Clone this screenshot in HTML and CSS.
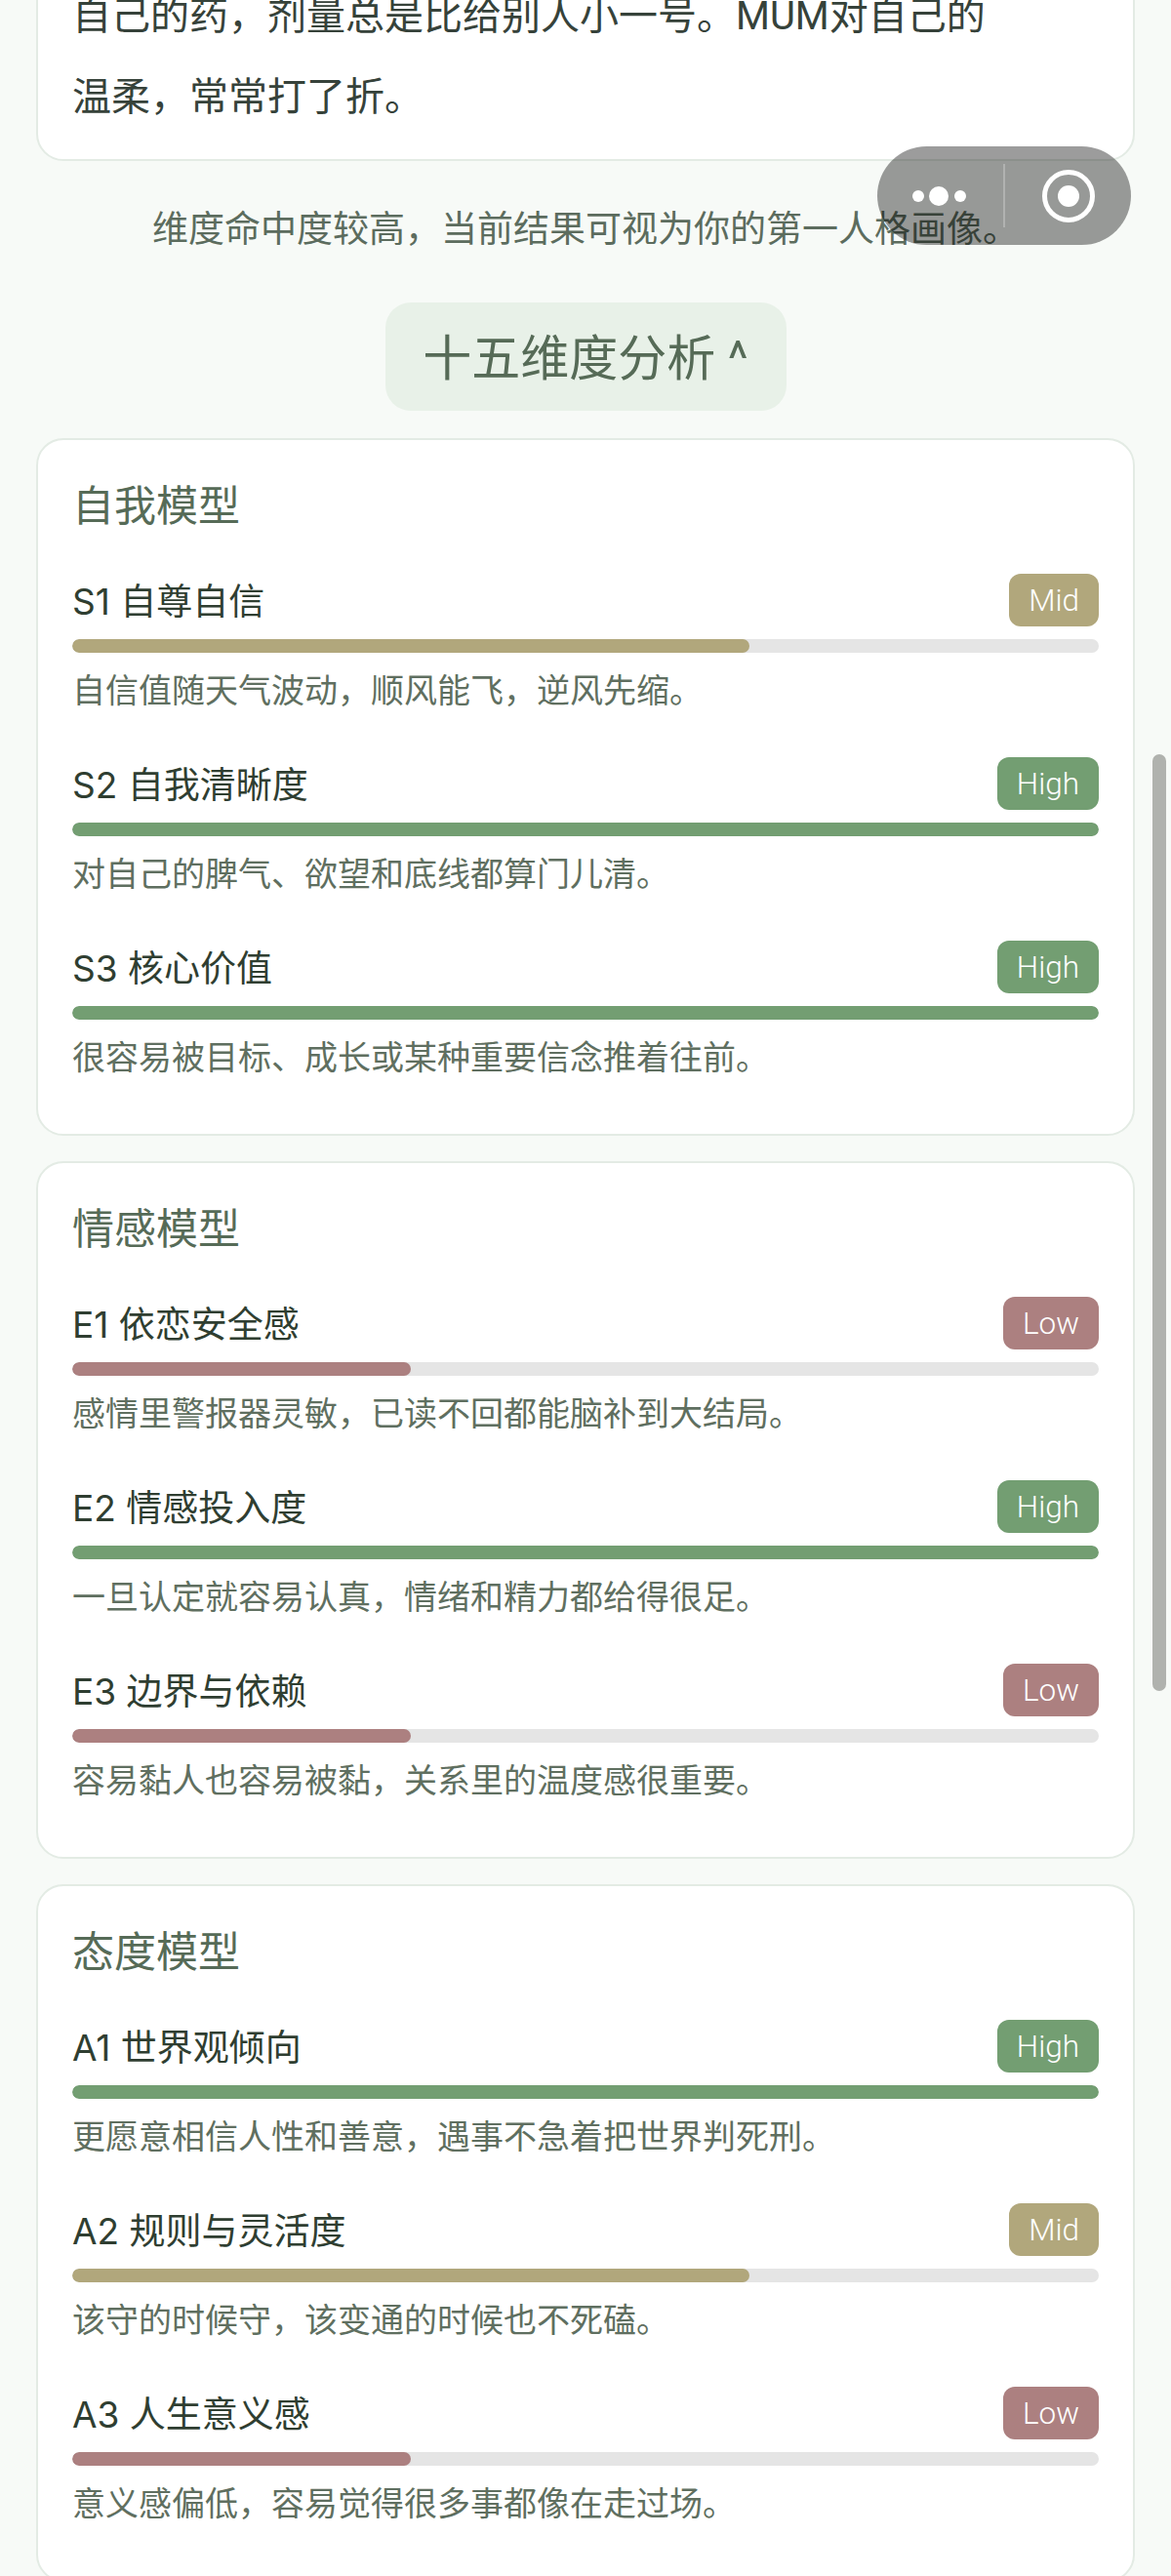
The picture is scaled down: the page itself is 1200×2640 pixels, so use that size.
FILE: index.html
```html
<!DOCTYPE html>
<html lang="zh-CN">
<head>
<meta charset="UTF-8" />
<meta name="viewport" content="width=device-width, initial-scale=1" />
<title>人格测试结果</title>
<link rel="stylesheet" href="styles.css">
</head>
<body>

<div class="page">
  <div class="card intro-card">
    <p class="intro-text">自己的药，剂量总是比给别人小一号。MUM对自己的温柔，常常打了折。</p>
  </div>

  <p class="hint">维度命中度较高，当前结果可视为你的第一人格画像。</p>

  <div class="toggle-wrap">
    <button class="toggle">十五维度分析 ^</button>
  </div>

  <section class="card model">
    <h3 class="model-title">自我模型</h3>

    <div class="dim mid">
      <div class="dim-head"><span class="dim-name">S1 自尊自信</span><span class="badge">Mid</span></div>
      <div class="track"><div class="fill"></div></div>
      <p class="dim-desc">自信值随天气波动，顺风能飞，逆风先缩。</p>
    </div>
    <div class="dim high">
      <div class="dim-head"><span class="dim-name">S2 自我清晰度</span><span class="badge">High</span></div>
      <div class="track"><div class="fill"></div></div>
      <p class="dim-desc">对自己的脾气、欲望和底线都算门儿清。</p>
    </div>
    <div class="dim high">
      <div class="dim-head"><span class="dim-name">S3 核心价值</span><span class="badge">High</span></div>
      <div class="track"><div class="fill"></div></div>
      <p class="dim-desc">很容易被目标、成长或某种重要信念推着往前。</p>
    </div>
  </section>

  <section class="card model">
    <h3 class="model-title">情感模型</h3>

    <div class="dim low">
      <div class="dim-head"><span class="dim-name">E1 依恋安全感</span><span class="badge">Low</span></div>
      <div class="track"><div class="fill"></div></div>
      <p class="dim-desc">感情里警报器灵敏，已读不回都能脑补到大结局。</p>
    </div>
    <div class="dim high">
      <div class="dim-head"><span class="dim-name">E2 情感投入度</span><span class="badge">High</span></div>
      <div class="track"><div class="fill"></div></div>
      <p class="dim-desc">一旦认定就容易认真，情绪和精力都给得很足。</p>
    </div>
    <div class="dim low">
      <div class="dim-head"><span class="dim-name">E3 边界与依赖</span><span class="badge">Low</span></div>
      <div class="track"><div class="fill"></div></div>
      <p class="dim-desc">容易黏人也容易被黏，关系里的温度感很重要。</p>
    </div>
  </section>

  <section class="card model">
    <h3 class="model-title">态度模型</h3>

    <div class="dim high">
      <div class="dim-head"><span class="dim-name">A1 世界观倾向</span><span class="badge">High</span></div>
      <div class="track"><div class="fill"></div></div>
      <p class="dim-desc">更愿意相信人性和善意，遇事不急着把世界判死刑。</p>
    </div>
    <div class="dim mid">
      <div class="dim-head"><span class="dim-name">A2 规则与灵活度</span><span class="badge">Mid</span></div>
      <div class="track"><div class="fill"></div></div>
      <p class="dim-desc">该守的时候守，该变通的时候也不死磕。</p>
    </div>
    <div class="dim low">
      <div class="dim-head"><span class="dim-name">A3 人生意义感</span><span class="badge">Low</span></div>
      <div class="track"><div class="fill"></div></div>
      <p class="dim-desc">意义感偏低，容易觉得很多事都像在走过场。</p>
    </div>
  </section>

  <!-- overlays: mini program capsule and scrollbar -->
  <div class="capsule">
    <div class="capsule-part">
      <svg width="80" height="24" viewBox="0 0 80 24"><circle cx="17" cy="12" r="6" fill="#fff"/><circle cx="38" cy="12" r="10" fill="#fff"/><circle cx="60" cy="12" r="6" fill="#fff"/></svg>
    </div>
    <div class="capsule-line"></div>
    <div class="capsule-part">
      <svg width="56" height="56" viewBox="0 0 56 56"><circle cx="28" cy="28" r="24.5" fill="none" stroke="#fff" stroke-width="5"/><circle cx="28" cy="28" r="11" fill="#fff"/></svg>
    </div>
  </div>
  <div class="scrollbar"></div>
</div>

</body>
</html>
```

FILE: styles.css
```css
* {
  box-sizing: border-box;
}
html, body {
  margin: 0;
  padding: 0;
}
body {
  font-family: "Roboto", "Noto Sans CJK SC", sans-serif;
  background: #f7faf7;
}
.page {
  position: relative;
  width: 1200px;
  height: 2640px;
  padding: 0 37px;
  overflow: hidden;
}
.card {
  background: #fff;
  border: 2px solid #e3ebe4;
  border-radius: 28px;
}
.intro-card {
  margin-top: -52px;
  padding: 25px 35px 22px;
}
.intro-text {
  margin: 0;
  max-width: 950px;
  font-size: 40px;
  line-height: 83px;
  color: #36423a;
}
.hint {
  margin: 46px 0 0;
  font-size: 37px;
  line-height: 50px;
  text-align: center;
  color: #5c6c5e;
}
.toggle-wrap {
  display: flex;
  justify-content: center;
  margin-top: 49px;
}
.toggle {
  width: 411px;
  height: 111px;
  padding: 0 0 5px;
  border: none;
  border-radius: 26px;
  background: #e8f1e8;
  color: #566b57;
  font-family: inherit;
  font-size: 50px;
}
.model {
  height: 715px;
  margin-top: 26px;
  padding: 40px 35px 0;
}
.toggle-wrap + .model {
  margin-top: 28px;
}
.model-title {
  margin: 0 0 41px;
  font-size: 43px;
  line-height: 56px;
  font-weight: 400;
  color: #566b57;
}
.dim {
  margin-bottom: 43px;
}
.dim-head {
  display: flex;
  justify-content: space-between;
  align-items: center;
  height: 54px;
}
.dim-name {
  margin-bottom: 3px;
  font-family: "Inter", "Noto Sans CJK SC", sans-serif;
  font-size: 37px;
  color: #2f3e31;
}
.badge {
  padding: 2px 20px 0;
  height: 54px;
  line-height: 52px;
  border-radius: 12px;
  color: #fff;
  font-size: 31.5px;
  font-weight: 300;
}
.track {
  height: 14px;
  margin-top: 13px;
  background: #e5e5e5;
  border-radius: 7px;
  overflow: hidden;
}
.fill {
  height: 100%;
  border-radius: 7px;
}
.dim-desc {
  margin: 14px 0 0;
  font-size: 34px;
  line-height: 50px;
  color: #5f6f60;
}
.high .badge, .high .fill {
  background: #739e72;
}
.high .fill {
  width: 100%;
}
.mid .badge, .mid .fill {
  background: #b1a77c;
}
.mid .fill {
  width: 66%;
}
.low .badge, .low .fill {
  background: #ac8080;
}
.low .fill {
  width: 33%;
}
.capsule {
  position: absolute;
  left: 899px;
  top: 150px;
  width: 260px;
  height: 101px;
  display: flex;
  align-items: center;
  border-radius: 51px;
  background: rgba(0,0,0,0.39);
}
.capsule-part {
  flex: 1;
  display: flex;
  justify-content: center;
  align-items: center;
}
.capsule-line {
  width: 2px;
  height: 65px;
  background: rgba(255,255,255,0.25);
}
.scrollbar {
  position: absolute;
  left: 1181px;
  top: 773px;
  width: 14px;
  height: 960px;
  border-radius: 7px;
  background: #b0b2ae;
}
```
